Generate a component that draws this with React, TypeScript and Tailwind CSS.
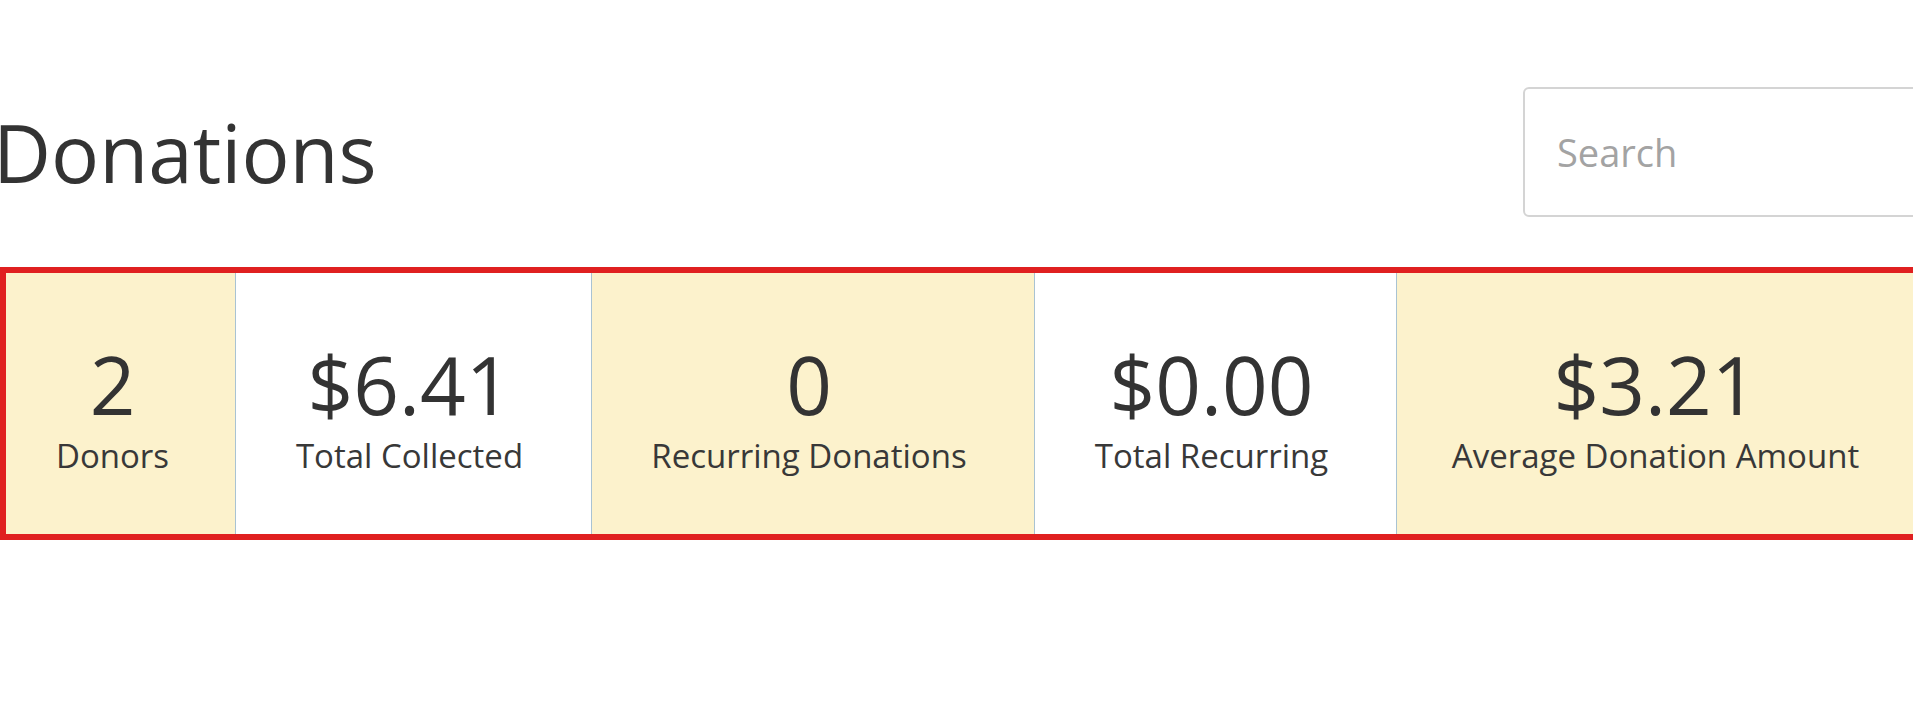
import React from 'react'

type Stat = {
  value: string
  label: string
  width: string
  highlight: boolean
}

const stats: Stat[] = [
  { value: '2', label: 'Donors', width: 'w-[229px] pr-[16px]', highlight: true },
  { value: '$6.41', label: 'Total Collected', width: 'w-[356px] pr-2', highlight: false },
  { value: '0', label: 'Recurring Donations', width: 'w-[443px] pr-2', highlight: true },
  { value: '$0.00', label: 'Total Recurring', width: 'w-[362px] pr-2', highlight: false },
  { value: '$3.21', label: 'Average Donation Amount', width: 'w-[526px] pr-2', highlight: true },
]

function StatCell({ stat, first }: { stat: Stat; first: boolean }) {
  return (
    <div
      className={
        stat.width +
        ' shrink-0 flex flex-col items-center pt-[71px] ' +
        (stat.highlight ? 'bg-[#fcf2cc] ' : 'bg-white ') +
        (first ? '' : 'border-l border-[#a9c3d3]')
      }
    >
      <div className="text-[80px] leading-none text-[#333]">{stat.value}</div>
      <div className="mt-[15px] text-[33px] leading-none text-[#383838] whitespace-nowrap">{stat.label}</div>
    </div>
  )
}

export default function App() {
  return (
    <div className="w-full min-h-[704px] overflow-hidden bg-white font-['Open_Sans',sans-serif]">
      <div className="w-[1928px]">
        <div className="mt-[87px] flex items-center justify-between">
          <h1 className="ml-[-7px] text-[80px] leading-none font-normal text-[#333]">Donations</h1>
          <input
            type="text"
            placeholder="Search"
            className="w-[405px] h-[130px] rounded-[6px] border-2 border-[#d4d4d4] pl-[32px] text-[38px] placeholder:text-[#a3a3a3] outline-none"
          />
        </div>

        <div className="mt-[50px] flex h-[273px] border-[6px] border-[#e02020]">
          {stats.map((s, i) => (
            <StatCell key={s.label} stat={s} first={i === 0} />
          ))}
        </div>
      </div>
    </div>
  )
}
